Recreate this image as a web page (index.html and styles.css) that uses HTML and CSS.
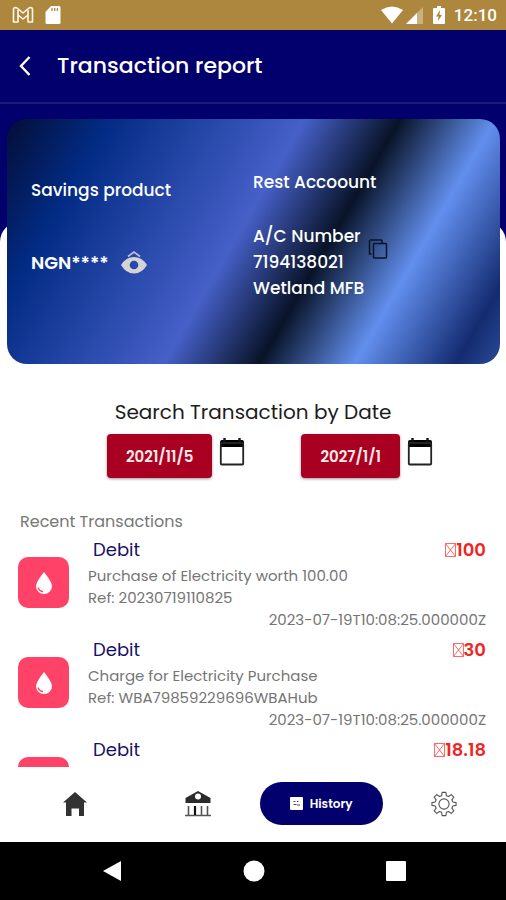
FILE: index.html
```html
<!DOCTYPE html>
<html lang="en">
<head>
<meta charset="utf-8">
<meta name="viewport" content="width=device-width, initial-scale=1">
<title>Transaction report</title>
<link rel="stylesheet" href="styles.css">
</head>
<body>
<div class="status">
  <div class="status-group">
    <svg width="22" height="18" viewBox="0 0 22 18" fill="none" stroke="#fff8e6" stroke-width="1.600" stroke-linejoin="round"><path d="M1.500 3.500Q1.500 1.500 3.500 1.500L5 2 11 7 17 2 18.500 1.500Q20.500 1.500 20.500 3.500V16H16V9L11 13 6 9V16H1.500Z"/><path d="M6 9V4M16 9V4"/></svg>
    <svg width="16" height="20" viewBox="0 0 16 20"><path fill="#fff" d="M6 1h8q1.500 0 1.500 1.500v15q0 1.500-1.500 1.500H2Q.5 19 .5 17.500V7Z"/><path stroke="#ad873d" stroke-width="1.300" d="M7 3v3M9.700 3v3M12.400 3v3"/></svg>
  </div>
  <div class="status-group status-right">
    <svg width="22" height="18" viewBox="0 0 22 18" fill="#fff"><path d="M0 4Q11-3 22 4L11 17.500Z"/></svg>
    <svg class="signal" width="17" height="17" viewBox="0 0 17 17" fill="#fff"><path opacity=".35" d="M17 0v17H0Z"/><path d="M11 6v11H0Z"/></svg>
    <svg class="battery" width="12" height="18" viewBox="0 0 12 18"><path fill="#fff" d="M4 0h4v2h3q1 0 1 1v14q0 1-1 1H1q-1 0-1-1V3q0-1 1-1h3Z"/><path fill="#ad873d" d="M7 4 3 10.500h2.500L5 15l4-6H6.500Z"/></svg>
    <span class="clock">12:10</span>
  </div>
</div>
<header class="header">
  <button class="back" aria-label="Back"><svg width="12" height="20" viewBox="0 0 12 20" fill="none" stroke="#fff" stroke-width="2.400"><path d="M10.500 1 2 10l8.500 9"/></svg></button>
  <h1>Transaction report</h1>
</header>
<main class="main">
  <div class="sheet">
    <section class="card">
      <div class="balance">
        <p>Savings product</p>
        <div class="amount-row">
          <strong>NGN****</strong>
          <button aria-label="Show balance"><svg width="26" height="24" viewBox="0 0 26 24"><path fill="none" stroke="#b9c3dc" stroke-width="1.600" d="M7 5.500 13 1l6 4.500"/><path fill="#d4d4d6" fill-rule="evenodd" d="M0 14Q5 6 13 6t13 8q-5 8.500-13 8.500T0 14Zm13-4.300a4.300 4.300 0 1 0 0 8.600a4.300 4.300 0 0 0 0-8.600Z"/></svg></button>
        </div>
      </div>
      <div class="account">
        <p>Rest Accoount</p>
        <div class="account-row">
          <p>A/C Number<br>7194138021<br>Wetland MFB</p>
          <button aria-label="Copy account number"><svg width="20" height="20" viewBox="0 0 20 20" fill="none" stroke="#071329" stroke-width="1.500"><path d="M3.500 15H1.500V2q0-1 1-1H13q1 0 1 1v2"/><rect x="5.500" y="4.500" width="13" height="14.500" rx="1"/></svg></button>
        </div>
      </div>
    </section>
    <section class="search">
      <h2>Search Transaction by Date</h2>
      <div class="dates">
        <div class="date"><button class="date-value">2021/11/5</button><button aria-label="Choose start date"><svg width="26" height="28" viewBox="0 0 26 28"><path d="M3 2h20q2 0 2 2v5H1V4q0-2 2-2Z"/><path stroke="#111" stroke-width="2.400" d="M5.500 0v4M20.500 0v4"/><rect x="1.800" y="5" width="22.400" height="21.500" rx="1" fill="none" stroke="#222" stroke-width="1.800"/></svg></button></div>
        <div class="date"><button class="date-value">2027/1/1</button><button aria-label="Choose end date"><svg width="26" height="28" viewBox="0 0 26 28"><path d="M3 2h20q2 0 2 2v5H1V4q0-2 2-2Z"/><path stroke="#111" stroke-width="2.400" d="M5.500 0v4M20.500 0v4"/><rect x="1.800" y="5" width="22.400" height="21.500" rx="1" fill="none" stroke="#222" stroke-width="1.800"/></svg></button></div>
      </div>
    </section>
    <section class="recent">
      <h3>Recent Transactions</h3>
      <ul>
        <li>
          <span class="tile"><svg width="18" height="24" viewBox="0 0 18 24"><path fill="#fff" d="M9 1Q17 11 17 15.500a8 7.500 0 0 1-16 0Q1 11 9 1Z"/><path fill="none" stroke="#ff4268" stroke-width="1.300" d="M3 16.500q1.500 4 5 4"/></svg></span>
          <div class="details">
            <div class="top"><span class="kind">Debit</span><span class="amount"><svg width="11" height="14" viewBox="0 0 11 14"><path fill="none" stroke="#f44" stroke-width=".8" d="M.5.5h10v13H.5ZM.5.5l10 13M10.500.5l-10 13"/></svg>100</span></div>
            <p>Purchase of Electricity worth 100.00</p><p>Ref: 20230719110825</p><time>2023-07-19T10:08:25.000000Z</time>
          </div>
        </li>
        <li>
          <span class="tile"><svg width="18" height="24" viewBox="0 0 18 24"><path fill="#fff" d="M9 1Q17 11 17 15.500a8 7.500 0 0 1-16 0Q1 11 9 1Z"/><path fill="none" stroke="#ff4268" stroke-width="1.300" d="M3 16.500q1.500 4 5 4"/></svg></span>
          <div class="details">
            <div class="top"><span class="kind">Debit</span><span class="amount"><svg width="11" height="14" viewBox="0 0 11 14"><path fill="none" stroke="#f44" stroke-width=".8" d="M.5.5h10v13H.5ZM.5.5l10 13M10.500.5l-10 13"/></svg>30</span></div>
            <p>Charge for Electricity Purchase</p><p>Ref: WBA79859229696WBAHub</p><time>2023-07-19T10:08:25.000000Z</time>
          </div>
        </li>
        <li>
          <span class="tile"></span>
          <div class="details">
            <div class="top"><span class="kind">Debit</span><span class="amount"><svg width="11" height="14" viewBox="0 0 11 14"><path fill="none" stroke="#f44" stroke-width=".8" d="M.5.5h10v13H.5ZM.5.5l10 13M10.500.5l-10 13"/></svg>18.18</span></div>
          </div>
        </li>
      </ul>
    </section>
  </div>
</main>
<nav class="tabs">
  <a href="#home" aria-label="Home"><svg width="26" height="26" viewBox="0 0 26 26" fill="#333"><path d="M13 1 25 11.500H22V25h-5v-7.500H9.500V25H4V11.500H1Z"/></svg></a>
  <a href="#bank" aria-label="Bank"><svg width="28" height="26" viewBox="0 0 28 26"><path fill="#2b2b2b" fill-rule="evenodd" d="M14 0 26.500 7v5h-25V7ZM14 2.500a3 3 0 1 0 0 6a3 3 0 0 0 0-6Z"/><path fill="none" stroke="#555" stroke-width="1.600" d="M4.500 15v9M17.500 15v9M23.500 15v9M1 24.500h26"/><path stroke="#111" stroke-width="2.200" d="M11 15v9"/></svg></a>
  <a class="current" href="#history"><svg width="13" height="13" viewBox="0 0 13 13"><rect width="13" height="13" rx="1" fill="#fff"/><path stroke="#447" d="M3.500 4.500h2M7 4.500h1.500M3.500 7.500h3M7 8h3"/></svg>History</a>
  <a href="#settings" aria-label="Settings"><svg width="26" height="26" viewBox="0 0 28 28" fill="none" stroke="#555" stroke-width="1.200" stroke-linejoin="round"><path d="M12 1.500h4l.6 3.500 2.300 1 2.900-2.100 2.800 2.800-2.100 2.900 1 2.300 3.500.6v3l-3.500.6-1 2.300 2.100 2.900-2.800 2.800-2.900-2.100-2.300 1-.6 3.500h-4l-.6-3.500-2.300-1-2.900 2.100-2.800-2.800 2.100-2.900-1-2.300-3.500-.6v-3l3.500-.6 1-2.300-2.100-2.900 2.800-2.800 2.900 2.100 2.300-1Z"/><circle cx="14" cy="14" r="5.500"/></svg></a>
</nav>
<div class="system">
  <svg width="20" height="22" viewBox="0 0 20 22" fill="#fff"><path d="M19 1v20L1 11Z"/></svg>
  <svg width="22" height="22" viewBox="0 0 22 22" fill="#fff"><circle cx="11" cy="11" r="10.500"/></svg>
  <svg width="20" height="20" viewBox="0 0 20 20" fill="#fff"><rect width="20" height="20" rx="1"/></svg>
</div>
</body>
</html>
```
FILE: styles.css
```css
* { box-sizing: border-box; }
body {
  margin: 0;
  height: 100vh;
  display: flex;
  flex-direction: column;
  overflow: hidden;
  background: #fff;
  font-family: Poppins, Inter, "Open Sans", sans-serif;
}
h1, h2, h3, p, ul { margin: 0; padding: 0; }
ul { list-style: none; }
svg { display: block; flex: none; }
button { border: 0; padding: 0; background: none; font: inherit; cursor: pointer; }
.status {
  flex: none;
  display: flex;
  justify-content: space-between;
  height: 30px;
  padding: 0 9px 0 12px;
  background: #ad873d;
}
.status-group { display: flex; align-items: center; gap: 11px; }
.status-right { gap: 3px; }
.battery { margin-left: 7px; }
.clock { margin-left: 6px; color: #fff; font: 500 17px Roboto, sans-serif; }
.header {
  flex: none;
  display: flex;
  align-items: center;
  gap: 26px;
  height: 74px;
  padding: 0 19px;
  border-bottom: 2px solid #1b1b78;
  background: #02006c;
  color: #fff;
}
.header h1 { font-size: 22px; font-weight: 500; line-height: 32px; }
.main {
  flex: 1;
  min-height: 0;
  overflow: hidden;
  padding-top: 118px;
  background: linear-gradient(#02006c 160px, #fff 160px);
}
.sheet { border-radius: 20px 20px 0 0; background: #fff; }
.card {
  position: relative;
  top: -103px;
  display: grid;
  grid-template-columns: 222px 1fr;
  height: 245px;
  margin: 0 6px 0 7px;
  padding: 0 24px;
  border-radius: 20px;
  color: #fff;
  font-size: 17px;
  font-weight: 500;
  line-height: 26px;
  background: linear-gradient(120deg, #040d35 0%, #022b84 16%, #4660c8 47%, #081328 62%, #628fee 77%, #142b70 93%, #2a4b97 100%);
}
.balance { padding-top: 58px; }
.amount-row { display: flex; align-items: center; gap: 12px; margin-top: 47px; }
.amount-row strong { font-size: 18px; font-weight: 600; }
.account { padding-top: 50px; }
.account-row { display: flex; gap: 4px; margin-top: 28px; }
.account-row button { align-self: flex-start; margin-top: 16px; }
.search { margin-top: -70px; }
.search h2 {
  color: #1c1c1c;
  font-size: 20px;
  font-weight: 400;
  line-height: 30px;
  text-align: center;
}
.dates { display: flex; justify-content: center; gap: 56px; padding-left: 34px; margin-top: 7px; }
.date { display: flex; align-items: flex-start; gap: 7px; }
.date > button:last-child { margin-top: 4px; }
.date-value {
  height: 44px;
  padding: 0 19px;
  border-radius: 4px;
  background: #a90022;
  box-shadow: 0 1px 3px #0006;
  color: #ffe9e9;
  font-size: 15px;
  font-weight: 600;
}
.recent { padding: 32px 20px 0 18px; }
.recent h3 { padding-left: 2px; color: #777; font-size: 16px; font-weight: 400; line-height: 24px; }
.recent li { display: flex; gap: 19px; height: 100px; }
.tile {
  flex: none;
  display: grid;
  place-items: center;
  width: 51px;
  height: 51px;
  margin-top: 23px;
  border-radius: 10px;
  background: #ff4268;
}
.details { flex: 1; color: #757575; font-size: 15px; line-height: 22px; }
.top { display: flex; justify-content: space-between; padding: 3px 0 2px 5px; line-height: 26px; }
.kind { color: #160f68; font-size: 18px; }
.amount { display: flex; align-items: center; color: #f12424; font-size: 18px; font-weight: 600; }
.details time { display: block; text-align: right; }
.tabs {
  flex: none;
  display: grid;
  grid-template-columns: repeat(4, 1fr);
  align-items: center;
  justify-items: center;
  height: 75px;
  padding: 0 0 2px 13px;
  background: #fff;
}
.tabs a { color: #fff; text-decoration: none; }
.tabs .current {
  display: flex;
  align-items: center;
  justify-content: center;
  gap: 7px;
  width: 100%;
  height: 43px;
  border-radius: 22px;
  background: #02006c;
  font-size: 12px;
  font-weight: 600;
}
.system {
  flex: none;
  display: flex;
  align-items: center;
  justify-content: space-between;
  height: 58px;
  padding: 0 100px 0 102px;
  background: #000;
}
```
